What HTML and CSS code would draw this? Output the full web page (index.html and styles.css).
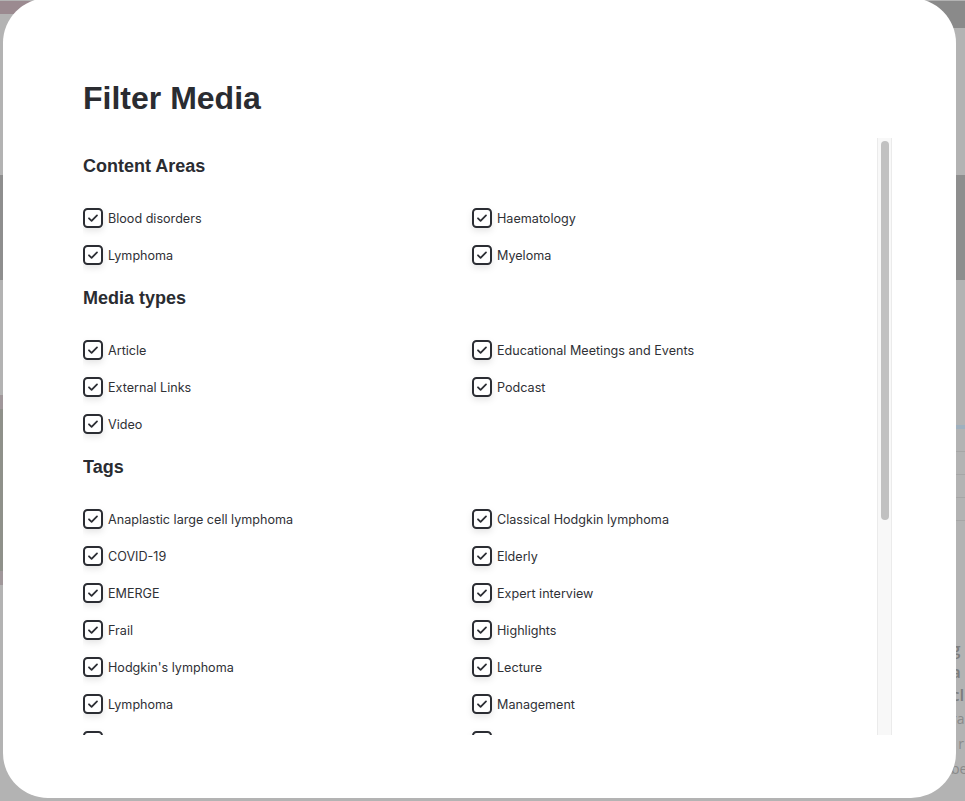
FILE: index.html
```html
<!DOCTYPE html>
<html lang="en">
<head>
<meta charset="utf-8">
<title>Filter Media</title>
<link rel="stylesheet" href="styles.css">
</head>
<body>
<div class="page">
  <div class="page-top"><div class="top-left"></div><div class="top-right"></div></div>
  <div class="page-band"></div>
  <div class="page-cards">
    <div class="card-img"></div>
    <div class="card-mid"></div>
    <div class="card-right"><div class="cr-line blue"></div><div class="cr-line"></div><div class="cr-line"></div><div class="cr-line"></div><div class="cr-line"></div></div>
  </div>
  <div class="page-text">
    <div class="pt-left"></div>
    <div class="pt-right"><span class="big">g</span><span class="big">a</span><span class="big">cl</span><span>ra</span><span>l r</span><span>be</span></div>
  </div>
</div>

<div class="modal" role="dialog" aria-label="Filter Media">
  <h1 class="modal-title">Filter Media</h1>
  <div class="modal-body">
    <div class="modal-scroll">
      <section class="group">
        <h3 class="group-title">Content Areas</h3>
        <div class="options">
          <label class="opt"><svg class="box" viewBox="0 0 20 20"><rect x="1" y="1" width="18" height="18" rx="3.5"/><path d="M6 10.3 L8.6 12.8 L14 7.4"/></svg>Blood disorders</label>
          <label class="opt"><svg class="box" viewBox="0 0 20 20"><rect x="1" y="1" width="18" height="18" rx="3.5"/><path d="M6 10.3 L8.6 12.8 L14 7.4"/></svg>Haematology</label>
          <label class="opt"><svg class="box" viewBox="0 0 20 20"><rect x="1" y="1" width="18" height="18" rx="3.5"/><path d="M6 10.3 L8.6 12.8 L14 7.4"/></svg>Lymphoma</label>
          <label class="opt"><svg class="box" viewBox="0 0 20 20"><rect x="1" y="1" width="18" height="18" rx="3.5"/><path d="M6 10.3 L8.6 12.8 L14 7.4"/></svg>Myeloma</label>
        </div>
      </section>
      <section class="group">
        <h3 class="group-title">Media types</h3>
        <div class="options">
          <label class="opt"><svg class="box" viewBox="0 0 20 20"><rect x="1" y="1" width="18" height="18" rx="3.5"/><path d="M6 10.3 L8.6 12.8 L14 7.4"/></svg>Article</label>
          <label class="opt"><svg class="box" viewBox="0 0 20 20"><rect x="1" y="1" width="18" height="18" rx="3.5"/><path d="M6 10.3 L8.6 12.8 L14 7.4"/></svg>Educational Meetings and Events</label>
          <label class="opt"><svg class="box" viewBox="0 0 20 20"><rect x="1" y="1" width="18" height="18" rx="3.5"/><path d="M6 10.3 L8.6 12.8 L14 7.4"/></svg>External Links</label>
          <label class="opt"><svg class="box" viewBox="0 0 20 20"><rect x="1" y="1" width="18" height="18" rx="3.5"/><path d="M6 10.3 L8.6 12.8 L14 7.4"/></svg>Podcast</label>
          <label class="opt"><svg class="box" viewBox="0 0 20 20"><rect x="1" y="1" width="18" height="18" rx="3.5"/><path d="M6 10.3 L8.6 12.8 L14 7.4"/></svg>Video</label>
        </div>
      </section>
      <section class="group">
        <h3 class="group-title">Tags</h3>
        <div class="options">
          <label class="opt"><svg class="box" viewBox="0 0 20 20"><rect x="1" y="1" width="18" height="18" rx="3.5"/><path d="M6 10.3 L8.6 12.8 L14 7.4"/></svg>Anaplastic large cell lymphoma</label>
          <label class="opt"><svg class="box" viewBox="0 0 20 20"><rect x="1" y="1" width="18" height="18" rx="3.5"/><path d="M6 10.3 L8.6 12.8 L14 7.4"/></svg>Classical Hodgkin lymphoma</label>
          <label class="opt"><svg class="box" viewBox="0 0 20 20"><rect x="1" y="1" width="18" height="18" rx="3.5"/><path d="M6 10.3 L8.6 12.8 L14 7.4"/></svg>COVID-19</label>
          <label class="opt"><svg class="box" viewBox="0 0 20 20"><rect x="1" y="1" width="18" height="18" rx="3.5"/><path d="M6 10.3 L8.6 12.8 L14 7.4"/></svg>Elderly</label>
          <label class="opt"><svg class="box" viewBox="0 0 20 20"><rect x="1" y="1" width="18" height="18" rx="3.5"/><path d="M6 10.3 L8.6 12.8 L14 7.4"/></svg>EMERGE</label>
          <label class="opt"><svg class="box" viewBox="0 0 20 20"><rect x="1" y="1" width="18" height="18" rx="3.5"/><path d="M6 10.3 L8.6 12.8 L14 7.4"/></svg>Expert interview</label>
          <label class="opt"><svg class="box" viewBox="0 0 20 20"><rect x="1" y="1" width="18" height="18" rx="3.5"/><path d="M6 10.3 L8.6 12.8 L14 7.4"/></svg>Frail</label>
          <label class="opt"><svg class="box" viewBox="0 0 20 20"><rect x="1" y="1" width="18" height="18" rx="3.5"/><path d="M6 10.3 L8.6 12.8 L14 7.4"/></svg>Highlights</label>
          <label class="opt"><svg class="box" viewBox="0 0 20 20"><rect x="1" y="1" width="18" height="18" rx="3.5"/><path d="M6 10.3 L8.6 12.8 L14 7.4"/></svg>Hodgkin's lymphoma</label>
          <label class="opt"><svg class="box" viewBox="0 0 20 20"><rect x="1" y="1" width="18" height="18" rx="3.5"/><path d="M6 10.3 L8.6 12.8 L14 7.4"/></svg>Lecture</label>
          <label class="opt"><svg class="box" viewBox="0 0 20 20"><rect x="1" y="1" width="18" height="18" rx="3.5"/><path d="M6 10.3 L8.6 12.8 L14 7.4"/></svg>Lymphoma</label>
          <label class="opt"><svg class="box" viewBox="0 0 20 20"><rect x="1" y="1" width="18" height="18" rx="3.5"/><path d="M6 10.3 L8.6 12.8 L14 7.4"/></svg>Management</label>
          <label class="opt"><svg class="box" viewBox="0 0 20 20"><rect x="1" y="1" width="18" height="18" rx="3.5"/><path d="M6 10.3 L8.6 12.8 L14 7.4"/></svg>Mantle cell lymphoma</label>
          <label class="opt"><svg class="box" viewBox="0 0 20 20"><rect x="1" y="1" width="18" height="18" rx="3.5"/><path d="M6 10.3 L8.6 12.8 L14 7.4"/></svg>Multiple myeloma</label>
        </div>
      </section>
    </div>
    <div class="scrollbar" aria-hidden="true"><div class="thumb"></div></div>
  </div>
</div>
</body>
</html>
```

FILE: styles.css
```css
html, body {
  margin: 0;
  padding: 0;
}
body {
  width: 965px;
  height: 801px;
  overflow: hidden;
  position: relative;
  background: #b2b2b2;
  font-family: "Liberation Sans", Arial, sans-serif;
}

/* ---------- dimmed page behind the dialog ---------- */
.page {
  width: 965px;
  height: 801px;
  overflow: hidden;
  background: #b3b3b3;
}
.page-top {
  display: flex;
  height: 28px;
  padding-top: 1px;
}
.top-left {
  flex: 1;
  height: 13px;
  background: #9b8a90;
}
.top-right {
  width: 60px;
  height: 27px;
  background: #8a8a8a;
}
.page-band {
  margin-top: 146px;
  height: 105px;
  background: #8e8e8e;
}
.page-cards {
  display: flex;
  margin-top: 115px;
  height: 190px;
}
.card-img {
  width: 40px;
  background: linear-gradient(#a0979a 0 14px, #8f918a 14px 176px, #a0979a 176px);
}
.card-mid {
  flex: 1;
}
.card-right {
  width: 30px;
  padding-top: 30px;
  display: flex;
  flex-direction: column;
  gap: 22px;
}
.cr-line {
  height: 1px;
  background: #a6a6a6;
}
.cr-line.blue {
  height: 4px;
  background: #9fb0be;
}
.page-text {
  display: flex;
  margin-top: 52px;
}
.pt-left {
  flex: 1;
}
.pt-right {
  width: 14px;
  display: flex;
  flex-direction: column;
  font-family: "Open Sans", sans-serif;
  color: #8a8a8a;
  font-size: 14px;
  line-height: 25px;
}
.pt-right .big {
  font-size: 17px;
  line-height: 23px;
  font-weight: 600;
  color: #7e7e7e;
}

/* ---------- dialog ---------- */
.modal {
  position: absolute;
  left: 3px;
  top: -2px;
  width: 953px;
  height: 800px;
  box-sizing: border-box;
  padding: 81px 64px 63px 80px;
  background: #ffffff;
  border-radius: 45px;
  display: flex;
  flex-direction: column;
}
.modal-title {
  margin: 0 0 21px;
  font-family: "Liberation Sans", Arial, sans-serif;
  font-size: 32px;
  line-height: 38px;
  font-weight: 700;
  color: #2a2c31;
}
.modal-body {
  flex: 1;
  min-height: 0;
  display: flex;
}
.modal-scroll {
  flex: 1;
  min-width: 0;
  overflow: hidden;
  padding-top: 17px;
  box-sizing: border-box;
}
.scrollbar {
  flex: none;
  width: 15px;
  box-sizing: border-box;
  padding: 3px 2px 0 3px;
  background: #f8f8f8;
  border-left: 1px solid #ebebeb;
  border-right: 1px solid #ebebeb;
}
.thumb {
  height: 379px;
  background: #c1c1c1;
  border-radius: 4px;
}
.group {
  margin-bottom: 22px;
}
.group-title {
  margin: 0 0 31px;
  font-family: "Liberation Sans", Arial, sans-serif;
  font-size: 18px;
  line-height: 22px;
  font-weight: 700;
  color: #2a2c31;
}
.options {
  display: grid;
  grid-template-columns: 389px 1fr;
  row-gap: 17px;
}
.opt {
  display: flex;
  align-items: center;
  gap: 5px;
  height: 20px;
  font-family: Inter, "Noto Sans", sans-serif;
  font-size: 12.6px;
  line-height: 19px;
  color: #2f3136;
  cursor: pointer;
}
.box {
  flex: none;
  width: 20px;
  height: 20px;
  overflow: visible;
  filter: drop-shadow(0 3px 3px rgba(0, 0, 0, 0.10));
}
.box rect {
  fill: #fff;
  stroke: #2b2d33;
  stroke-width: 2;
}
.box path {
  fill: none;
  stroke: #2b2d33;
  stroke-width: 1.8;
  stroke-linecap: round;
  stroke-linejoin: round;
}
```
